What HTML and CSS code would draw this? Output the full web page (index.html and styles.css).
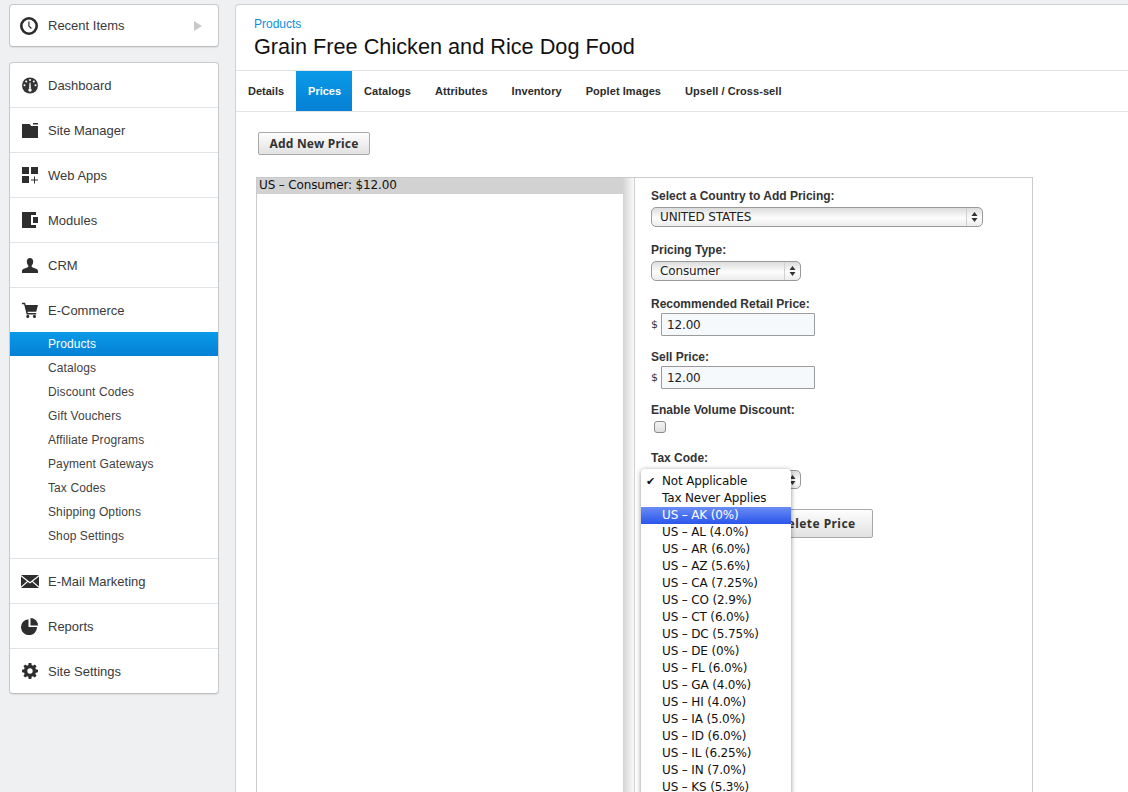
FILE: index.html
```html
<!DOCTYPE html>
<html lang="en">
<head>
    <meta charset="UTF-8">
    <title>Grain Free Chicken and Rice Dog Food</title>
    <link rel="stylesheet" href="styles.css">
</head>
<body>
    <div class="sidebar">
        <div class="box recent">
            <svg class="icon" viewBox="0 0 18 18"><circle cx="9" cy="9" r="7.700" fill="none" stroke="#2b2b2b" stroke-width="2.600"/><path d="M8.300 4.500h1.200v4.300l2.400 2.300-.9.9-2.700-2.700z" fill="#2b2b2b"/></svg>
            <span class="recent-label">Recent Items</span>
            <span class="recent-arrow"></span>
        </div>

        <div class="box nav">
            <div class="nav-item">
                <svg class="icon" viewBox="0 0 18 18"><circle cx="10" cy="9.500" r="8" fill="#333"/><g fill="#fff"><circle cx="10" cy="4" r="1"/><circle cx="6.200" cy="5.600" r="1"/><circle cx="13.800" cy="5.600" r="1"/><circle cx="4.500" cy="9.300" r="1"/><circle cx="15.500" cy="9.300" r="1"/><path d="M9.500 6.500h1l.4 6H9.100z"/></g><circle cx="10" cy="14" r="1.700" fill="#fff"/></svg>
                Dashboard
            </div>
            <div class="nav-item">
                <svg class="icon" viewBox="0 0 18 18"><path d="M2 3h7.500l1.800 2H18v12H2z" fill="#2e2e2e"/><path d="M13 2h5v1.500h-5z" fill="#2e2e2e"/></svg>
                Site Manager
            </div>
            <div class="nav-item">
                <svg class="icon" viewBox="0 0 18 18"><path d="M2 1h7v7H2zM11 1h7v7h-7zM2 10h7v7H2z" fill="#2e2e2e"/><path d="M14 10.500h1v3h3v1h-3v3h-1v-3h-3v-1h3z" fill="#2e2e2e"/></svg>
                Web Apps
            </div>
            <div class="nav-item">
                <svg class="icon" viewBox="0 0 18 18"><path d="M2 1h14v3h-5v10h5v3H2z" fill="#2e2e2e"/><path d="M13 6h5v6h-5z" fill="#2e2e2e"/></svg>
                Modules
            </div>
            <div class="nav-item">
                <svg class="icon" viewBox="0 0 18 18"><path d="M10 2c2 0 3.200 1.500 3.200 3.600 0 1.800-.7 3.200-1.500 4v1.300c1.500.9 5.800 1.600 6.300 3.600V17H2v-2.500c.5-2 4.800-2.700 6.300-3.600V9.600c-.8-.8-1.500-2.200-1.500-4C6.800 3.500 8 2 10 2z" fill="#2e2e2e"/></svg>
                CRM
            </div>

            <div class="nav-group">
                <div class="nav-item nav-item-open">
                    <svg class="icon" viewBox="-2.250 -1.100 20.250 20.250"><path d="M0 1h3.500l.7 2.500H18l-2 7.500H6.200l.4 1.500H16V14H5.200L2.400 2.500H0z" fill="#2e2e2e"/><circle cx="6.500" cy="16.200" r="1.700" fill="#2e2e2e"/><circle cx="14" cy="16.200" r="1.700" fill="#2e2e2e"/></svg>
                    E-Commerce
                </div>
                <div class="sub-item sub-item-active">Products</div>
                <div class="sub-item">Catalogs</div>
                <div class="sub-item">Discount Codes</div>
                <div class="sub-item">Gift Vouchers</div>
                <div class="sub-item">Affiliate Programs</div>
                <div class="sub-item">Payment Gateways</div>
                <div class="sub-item">Tax Codes</div>
                <div class="sub-item">Shipping Options</div>
                <div class="sub-item">Shop Settings</div>
            </div>

            <div class="nav-item">
                <svg class="icon icon-wide" viewBox="0 0 18 13"><path d="M0 0h18L9 7z" fill="#2e2e2e"/><path d="M0 1.500l6 4.700L0 11.500zM18 1.500l-6 4.700 6 5.300zM6.900 7L9 8.600 11.100 7 18 13H0z" fill="#2e2e2e"/></svg>
                E-Mail Marketing
            </div>
            <div class="nav-item">
                <svg class="icon" viewBox="0 0 18 18"><path d="M8.500 2.200V10H17a8 8 0 1 1-8.500-7.800z" fill="#2e2e2e"/><path d="M10.500 1a7.500 7.500 0 0 1 7.500 7.500h-7.500z" fill="#2e2e2e"/></svg>
                Reports
            </div>
            <div class="nav-item">
                <svg class="icon" viewBox="-2.250 -1.100 20.250 20.250"><path fill-rule="evenodd" d="M7.500 0h3l.4 2.400 1.400.6 2-1.400 2.100 2.100-1.400 2 .6 1.400 2.400.4v3l-2.400.4-.6 1.400 1.400 2-2.100 2.100-2-1.400-1.400.6-.4 2.400h-3l-.4-2.400-1.400-.6-2 1.400-2.100-2.100 1.400-2-.6-1.400L0 10.500v-3l2.400-.4.600-1.400-1.400-2 2.100-2.100 2 1.400 1.400-.6zM9 6a3 3 0 1 0 0 6 3 3 0 0 0 0-6z" fill="#2e2e2e"/></svg>
                Site Settings
            </div>
        </div>
    </div>

    <div class="main">
        <div class="page-head">
            <a class="crumb">Products</a>
            <h1>Grain Free Chicken and Rice Dog Food</h1>
        </div>

        <div class="tabs">
            <div class="tab">Details</div>
            <div class="tab tab-active">Prices</div>
            <div class="tab">Catalogs</div>
            <div class="tab">Attributes</div>
            <div class="tab">Inventory</div>
            <div class="tab">Poplet Images</div>
            <div class="tab">Upsell / Cross-sell</div>
        </div>

        <div class="content">
            <button class="button add-price">Add New Price</button>

            <div class="price-panel">
                <div class="price-list">
                    <div class="price-row">US – Consumer: $12.00</div>
                </div>
                <div class="splitter"></div>

                <div class="price-form">
                    <label class="field-label">Select a Country to Add Pricing:</label>
                    <div class="select select-country">UNITED STATES<span class="select-arrows"><svg viewBox="0 0 7 12" width="7" height="12"><path d="M3.500 1L6.500 5H.5zM3.500 11L.5 7h6z" fill="#333"/></svg></span></div>

                    <label class="field-label">Pricing Type:</label>
                    <div class="select select-small">Consumer<span class="select-arrows"><svg viewBox="0 0 7 12" width="7" height="12"><path d="M3.500 1L6.500 5H.5zM3.500 11L.5 7h6z" fill="#333"/></svg></span></div>

                    <label class="field-label field-label-input">Recommended Retail Price:</label>
                    <div class="money"><span class="money-sign">$</span><input class="money-input" type="text" value="12.00"></div>

                    <label class="field-label field-label-input">Sell Price:</label>
                    <div class="money"><span class="money-sign">$</span><input class="money-input" type="text" value="12.00"></div>

                    <label class="field-label field-label-check">Enable Volume Discount:</label>
                    <span class="check"></span>

                    <label class="field-label field-label-tax">Tax Code:</label>
                    <div class="select select-small select-tax">Not Applicable<span class="select-arrows"><svg viewBox="0 0 7 12" width="7" height="12"><path d="M3.500 1L6.500 5H.5zM3.500 11L.5 7h6z" fill="#333"/></svg></span></div>

                    <div class="form-buttons">
                        <button class="button delete-price">Delete Price</button>
                    </div>

                    <!-- menu abierto del select de Tax Code -->
                    <ul class="menu">
                        <li class="menu-checked">Not Applicable</li>
                        <li>Tax Never Applies</li>
                        <li class="menu-hover">US – AK (0%)</li>
                        <li>US – AL (4.0%)</li>
                        <li>US – AR (6.0%)</li>
                        <li>US – AZ (5.6%)</li>
                        <li>US – CA (7.25%)</li>
                        <li>US – CO (2.9%)</li>
                        <li>US – CT (6.0%)</li>
                        <li>US – DC (5.75%)</li>
                        <li>US – DE (0%)</li>
                        <li>US – FL (6.0%)</li>
                        <li>US – GA (4.0%)</li>
                        <li>US – HI (4.0%)</li>
                        <li>US – IA (5.0%)</li>
                        <li>US – ID (6.0%)</li>
                        <li>US – IL (6.25%)</li>
                        <li>US – IN (7.0%)</li>
                        <li>US – KS (5.3%)</li>
                    </ul>
                </div>
            </div>
        </div>
    </div>
</body>
</html>
```

FILE: styles.css
```css
html, body {
    height: 100%;
}

body {
    margin: 0;
    padding: 4px 0 0 9px;
    box-sizing: border-box;
    display: flex;
    align-items: flex-start;
    height: 792px;
    overflow: hidden;
    background-color: #eff0f1;
    font-family: "Liberation Sans", Arial, sans-serif;
    color: #333;
}

/* Sidebar */
.sidebar {
    width: 210px;
    flex-shrink: 0;
}

.box {
    background-color: #fff;
    border: 1px solid #c9cacb;
    border-bottom-color: #bdbebf;
    border-radius: 4px;
    box-shadow: 0 1px 1px rgba(0, 0, 0, 0.08);
}

.recent {
    height: 41px;
    display: flex;
    align-items: center;
    font-size: 13px;
    color: #3a3a3a;
}

.icon {
    width: 18px;
    height: 18px;
    flex-shrink: 0;
    margin: 0 10px 0 10px;
}

.icon-wide {
    height: 13px;
    margin: 0 9px 0 11px;
}

.recent-label {
    flex: 1;
}

.recent-arrow {
    width: 0;
    height: 0;
    margin-right: 16px;
    border-left: 8px solid #c8c8c8;
    border-top: 5px solid transparent;
    border-bottom: 5px solid transparent;
}

.nav {
    margin-top: 15px;
}

.nav-item {
    height: 44px;
    display: flex;
    align-items: center;
    font-size: 13px;
    color: #3a3a3a;
    border-bottom: 1px solid #e2e3e4;
}

.nav > .nav-item:last-child {
    border-bottom: none;
}

.nav-item-open {
    border-bottom: none;
}

.nav-group {
    padding-bottom: 10px;
    border-bottom: 1px solid #e2e3e4;
}

.sub-item {
    height: 24px;
    line-height: 24px;
    padding-left: 38px;
    font-size: 12px;
    letter-spacing: 0.1px;
    color: #3f3f3f;
}

.sub-item-active {
    color: #fff;
    background: linear-gradient(#0a9ae8, #0580d4);
}

/* Main panel */
.main {
    flex: 1;
    margin-left: 16px;
    height: 800px;
    background-color: #fff;
    border-top: 1px solid #d0d1d2;
    border-left: 1px solid #d0d1d2;
    border-top-left-radius: 4px;
}

.page-head {
    height: 66px;
    box-sizing: border-box;
    padding: 12px 0 0 18px;
    border-bottom: 1px solid #e2e3e4;
}

.crumb {
    display: block;
    font-size: 12px;
    line-height: 14px;
    color: #0a8fe0;
}

h1 {
    margin: 3px 0 0;
    font-size: 21.7px;
    line-height: 26px;
    font-weight: normal;
    color: #111;
}

.tabs {
    display: flex;
    height: 40px;
    border-bottom: 1px solid #e2e3e4;
}

.tab {
    padding: 0 12px;
    line-height: 40px;
    font-size: 11px;
    font-weight: bold;
    color: #2c2c2c;
}

.tab-active {
    padding-right: 11px;
    color: #fff;
    background: linear-gradient(#0a9ae8, #0580d4);
}

.tab-active ~ .tab {
    letter-spacing: 0.06px;
}

.content {
    padding: 20px 0 0 20px;
}

.button {
    display: block;
    font-family: "Noto Sans", sans-serif;
    font-size: 12px;
    font-weight: bold;
    letter-spacing: 0.2px;
    color: #333;
    background: linear-gradient(#fdfdfd, #e2e2e2);
    border: 1px solid #a9a9a9;
    border-radius: 2px;
    cursor: pointer;
}

.add-price {
    width: 112px;
    height: 23px;
    margin-left: 2px;
    padding: 0;
}

.price-panel {
    position: relative;
    display: flex;
    width: 775px;
    height: 640px;
    margin-top: 22px;
    border: 1px solid #c9cacb;
}

.price-list {
    width: 366px;
    border-right: 1px solid #d5d5d5;
}

.price-row {
    height: 16px;
    line-height: 15px;
    padding-left: 2px;
    font-family: "DejaVu Sans", sans-serif;
    font-size: 12px;
    letter-spacing: -0.15px;
    color: #111;
    background-color: #d2d2d2;
}

.splitter {
    width: 10px;
    background: linear-gradient(to right, #d8d8d8, #fafafa);
    border-right: 1px solid #d0d0d0;
}

.price-form {
    flex: 1;
    padding: 11px 0 0 16px;
}

.field-label {
    display: block;
    height: 15px;
    line-height: 15px;
    margin-bottom: 3px;
    font-size: 12px;
    font-weight: bold;
    color: #333;
}

.field-label-input {
    margin-bottom: 1px;
}

.field-label-check {
    margin-bottom: 3px;
}

.field-label-tax {
    margin-top: 18px;
    margin-bottom: 4px;
}

.select {
    position: relative;
    box-sizing: border-box;
    height: 20px;
    line-height: 18px;
    padding-left: 8px;
    margin-bottom: 16px;
    font-family: "DejaVu Sans", sans-serif;
    font-size: 12px;
    letter-spacing: -0.15px;
    color: #222;
    background: linear-gradient(#dcdcdc, #fdfdfd 55%, #ececec);
    border: 1px solid #9a9a9a;
    border-radius: 5px;
}

.select-country {
    width: 332px;
}

.select-small {
    width: 150px;
}

.select-tax {
    height: 19px;
    margin-bottom: 20px;
}

.select-arrows {
    position: absolute;
    top: 0;
    right: 0;
    bottom: 0;
    width: 15px;
    display: flex;
    align-items: center;
    justify-content: center;
    border-left: 1px solid #d0d0d0;
}

.money {
    display: flex;
    align-items: center;
    margin-bottom: 14px;
}

.money-sign {
    width: 10px;
    font-family: "DejaVu Sans", sans-serif;
    font-size: 11px;
    color: #333;
}

.money-input {
    box-sizing: border-box;
    width: 154px;
    height: 23px;
    padding: 0 5px;
    font-family: "DejaVu Sans", sans-serif;
    font-size: 12px;
    letter-spacing: -0.15px;
    color: #222;
    background-color: #f6f9fb;
    border: 1px solid #9b9b9b;
    border-radius: 1px;
}

.check {
    display: block;
    box-sizing: border-box;
    width: 12px;
    height: 12px;
    margin-left: 3px;
    background: linear-gradient(#f4f4f4, #dedede);
    border: 1px solid #8a8a8a;
    border-radius: 3px;
}

.form-buttons {
    display: flex;
    justify-content: flex-end;
    width: 222px;
}

.delete-price {
    width: 112px;
    height: 29px;
    padding: 0;
    letter-spacing: 0.45px;
}

.menu {
    position: absolute;
    top: 291px;
    left: 384px;
    width: 150px;
    margin: 0;
    padding: 4px 0 0;
    list-style: none;
    background-color: #fff;
    border-radius: 4px 4px 0 0;
    box-shadow: 0 1px 5px rgba(0, 0, 0, 0.45);
    font-family: "DejaVu Sans", sans-serif;
    font-size: 12px;
    letter-spacing: -0.15px;
    color: #111;
}

.menu li {
    height: 17px;
    line-height: 17px;
    padding-left: 21px;
    white-space: nowrap;
}

.menu-checked {
    position: relative;
}

.menu-checked::before {
    content: "✔";
    position: absolute;
    left: 5px;
    font-size: 11px;
}

.menu .menu-hover {
    color: #fff;
    background: linear-gradient(#6a8cf5, #2a55ea);
}
```
